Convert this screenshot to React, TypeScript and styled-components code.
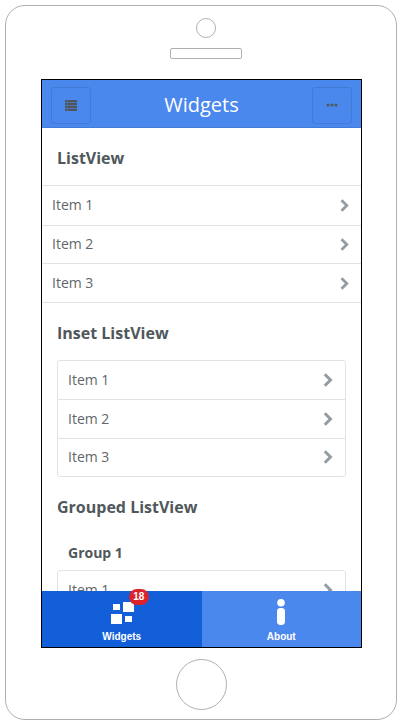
import React from "react";
import styled, { createGlobalStyle } from "styled-components";

const GlobalStyle = createGlobalStyle`
  *, *::before, *::after { box-sizing: border-box; }
  body {
    margin: 0;
    background: #fff;
    color: #50585c;
    font-family: "Open Sans", "Noto Sans", sans-serif;
    font-size: 14px;
  }
  h1, h2, h3, ul { margin: 0; padding: 0; }
`;

const Device = styled.main`
  display: flex;
  flex-direction: column;
  align-items: center;
  margin: 5px 7px 6px 5px;
  padding: 12px 34px 9px 35px;
  border: 1px solid #b0b0b0;
  border-radius: 20px;
  background: #fff;
`;

const Earpiece = styled.div`
  display: flex;
  flex-direction: column;
  align-items: center;
  gap: 10px;
  padding: 0 0 20px 9px;
`;

const Camera = styled.div`
  width: 20px;
  height: 20px;
  border: 1px solid #b0b0b0;
  border-radius: 50%;
`;

const Speaker = styled.div`
  width: 72px;
  height: 11px;
  border: 1px solid #b0b0b0;
  border-radius: 2px;
`;

const HomeButton = styled.button`
  width: 51px;
  height: 51px;
  margin-top: 11px;
  padding: 0;
  border: 1px solid #b0b0b0;
  border-radius: 50%;
  background: #fff;
`;

const Screen = styled.div`
  display: flex;
  flex-direction: column;
  align-self: stretch;
  height: 569px;
  border: 1px solid #000;
`;

const NavBar = styled.header`
  display: flex;
  flex: none;
  align-items: center;
  justify-content: space-between;
  height: 48px;
  padding: 4px 9px 0;
  border-bottom: 1px solid #447bd6;
  background: #4a88ee;
`;

const Title = styled.h1`
  padding-bottom: 2px;
  color: #fff;
  font-size: 20px;
  font-weight: 400;
  line-height: 28px;
`;

const NavButton = styled.button`
  display: flex;
  align-items: center;
  justify-content: center;
  width: 40px;
  height: 37px;
  padding: 0 0 1px;
  border: 1px solid #437ad6;
  border-radius: 3px;
  background: transparent;
  color: #50585c;
`;

const Content = styled.div`
  flex: 1;
  min-height: 0;
  overflow: hidden;
`;

const Heading = styled.h2`
  padding: 19px 15px 16px;
  font-size: 16px;
  font-weight: 700;
  line-height: 22px;
`;

const GroupTitle = styled.h3`
  padding: 9px 26px 7px;
  font-size: 14px;
  font-weight: 700;
  line-height: 20px;
`;

const List = styled.ul<{ $count: number; $inset?: boolean }>`
  display: grid;
  grid-auto-rows: 1fr;
  min-height: ${(p) => p.$count * 39 + (p.$inset ? 0 : 1)}px;
  margin: ${(p) => (p.$inset ? "0 15px" : "0")};
  border: 1px solid #e2e4e4;
  border-width: ${(p) => (p.$inset ? "1px" : "1px 0")};
  border-radius: ${(p) => (p.$inset ? "3px" : "0")};
  list-style: none;
`;

const Row = styled.li`
  display: flex;
  & + & { border-top: 1px solid #e2e4e4; }
`;

const RowLink = styled.a`
  display: flex;
  flex: 1;
  align-items: center;
  justify-content: space-between;
  padding: 0 12px 0 10px;
  color: #5f676b;
  line-height: 36px;
  text-decoration: none;
`;

const TabBar = styled.nav`
  display: flex;
  flex: none;
  height: 56px;
`;

const Tab = styled.a<{ $active?: boolean }>`
  display: flex;
  flex: 1;
  flex-direction: column;
  align-items: center;
  padding-top: 7px;
  background: ${(p) => (p.$active ? "#135fd9" : "#4a88ee")};
  color: #fff;
  font-family: "Liberation Sans", Arial, sans-serif;
  font-size: 10px;
  font-weight: 700;
  line-height: 12px;
  text-decoration: none;
`;

const TabIcon = styled.span`
  position: relative;
  display: flex;
  height: 33px;
`;

const Badge = styled.span`
  position: absolute;
  top: -9px;
  left: 19px;
  min-width: 20px;
  padding: 0 4px;
  border-radius: 8px;
  background: #db232c;
  line-height: 16px;
  text-align: center;
`;

const Chevron = ({ large = false }: { large?: boolean }) => (
  <svg width={large ? 10 : 9} height={large ? 14 : 13} viewBox="0 0 9 13" fill="none" aria-hidden="true">
    <path d="M1.5 1.2 6.8 6.5 1.5 11.8" stroke="#949da2" strokeWidth="2.8" />
  </svg>
);

const MenuIcon = () => (
  <svg width="12" height="11" viewBox="0 0 12 11" fill="currentColor" aria-hidden="true">
    {[0, 3, 6, 9].map((y) => (
      <React.Fragment key={y}>
        <rect x="0" y={y} width="2" height="2" />
        <rect x="2.5" y={y} width="9.5" height="2" />
      </React.Fragment>
    ))}
    <rect width="12" height="11" opacity="0.4" />
  </svg>
);

const MoreIcon = () => (
  <svg width="12" height="4" viewBox="0 0 12 4" fill="currentColor" aria-hidden="true">
    <circle cx="2" cy="2" r="1.6" />
    <circle cx="6" cy="2" r="1.6" />
    <circle cx="10" cy="2" r="1.6" />
  </svg>
);

const WidgetsIcon = () => (
  <svg width="24" height="29" viewBox="0 0 24 29" fill="#fff" aria-hidden="true">
    <rect x="3" y="6" width="7" height="6" />
    <rect x="13" y="4" width="11" height="10" />
    <rect x="1" y="16" width="11" height="10" />
    <rect x="15" y="18" width="7" height="6" />
  </svg>
);

const InfoIcon = () => (
  <svg width="8" height="29" viewBox="0 0 8 29" fill="#fff" aria-hidden="true">
    <circle cx="4" cy="4.7" r="3.8" />
    <rect x="0" y="10" width="8" height="17" rx="3.4" />
  </svg>
);

const ItemList = ({ items, inset }: { items: string[]; inset?: boolean }) => (
  <List $count={items.length} $inset={inset}>
    {items.map((item) => (
      <Row key={item}>
        <RowLink href="#">
          {item}
          <Chevron large={inset} />
        </RowLink>
      </Row>
    ))}
  </List>
);

const items = ["Item 1", "Item 2", "Item 3"];
const groupItems = ["Item 1"];

export default function App() {
  return (
    <>
      <GlobalStyle />
      <Device>
        <Earpiece>
          <Camera />
          <Speaker />
        </Earpiece>
        <Screen>
          <NavBar>
            <NavButton aria-label="Menu"><MenuIcon /></NavButton>
            <Title>Widgets</Title>
            <NavButton aria-label="More"><MoreIcon /></NavButton>
          </NavBar>
          <Content>
            <Heading>ListView</Heading>
            <ItemList items={items} />
            <Heading>Inset ListView</Heading>
            <ItemList items={items} inset />
            <Heading>Grouped ListView</Heading>
            <GroupTitle>Group 1</GroupTitle>
            <ItemList items={groupItems} inset />
          </Content>
          <TabBar>
            <Tab href="#widgets" $active>
              <TabIcon><WidgetsIcon /><Badge>18</Badge></TabIcon>
              Widgets
            </Tab>
            <Tab href="#about">
              <TabIcon><InfoIcon /></TabIcon>
              About
            </Tab>
          </TabBar>
        </Screen>
        <HomeButton aria-label="Home" />
      </Device>
    </>
  );
}
